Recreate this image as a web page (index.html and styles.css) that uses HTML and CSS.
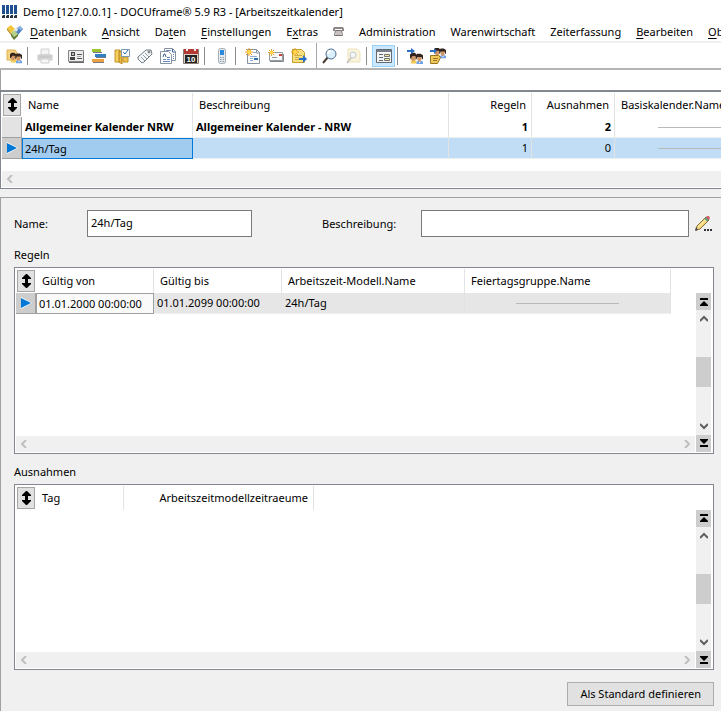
FILE: index.html
```html
<!DOCTYPE html>
<html lang="de">
<head>
<meta charset="utf-8">
<title>Demo [127.0.0.1] - DOCUframe® 5.9 R3 - [Arbeitszeitkalender]</title>
<link rel="stylesheet" href="styles.css">
</head>
<body>
<svg class="defs" width="0" height="0" aria-hidden="true">
  <symbol id="sort" viewBox="0 0 10 14"><path d="M5 0h1l4 4v1H7v4h3v1l-4 4H5L1 10V9h3V5H1V4z"/></symbol>
  <symbol id="play" viewBox="0 0 12 12"><path d="M1 0l11 6-11 6z" fill="#fff"/><path d="M1 1l10 5-10 5z" fill="#0078d7"/></symbol>
  <symbol id="left" viewBox="0 0 8 8"><path d="M6 0L2 4l4 4" fill="none" stroke="#bfbfbf" stroke-width="2"/></symbol>
  <symbol id="right" viewBox="0 0 8 8"><path d="M2 0l4 4-4 4" fill="none" stroke="#bfbfbf" stroke-width="2"/></symbol>
  <symbol id="up" viewBox="0 0 8 8"><path d="M0 6l4-4 4 4" fill="none" stroke="#606060" stroke-width="2"/></symbol>
  <symbol id="down" viewBox="0 0 8 8"><path d="M0 2l4 4 4-4" fill="none" stroke="#606060" stroke-width="2"/></symbol>
  <symbol id="first" viewBox="0 0 8 8"><path d="M0 0h8v2H0zM4 3l4 4v1H0V7z"/></symbol>
  <symbol id="last" viewBox="0 0 8 8"><path d="M0 6h8v2H0zM0 0h8v1L4 5 0 1z"/></symbol>
  <symbol id="star" viewBox="0 0 8 8"><path d="M4 0v8M0 4h8M1 1l6 6M7 1L1 7" stroke="#e39a1c" stroke-width="1"/><circle cx="4" cy="4" r="2" fill="#ffd84a"/></symbol>
  <symbol id="people" viewBox="0 0 16 16"><path d="M1 14v-3l2-1h3l2 1v3z" fill="#f3cb54"/><path d="M8 15v-3l2-1h4l2 1v3z" fill="#6fa0ea"/><path d="M1 4h6v5l-2 2H3L1 9z" fill="#cf9668"/><path d="M0 8V3l2-2h4l2 2v3L6 5H3L1 8z" fill="#33241e"/><path d="M9 5h5v5l-2 2h-1l-2-2z" fill="#cf9668"/><path d="M7 9V4l2-2h4l3 2v5h-1l-1-3H9L8 9z" fill="#33241e"/><path d="M11 12l1 2 1-2z" fill="#fff"/></symbol>
</svg>

<header class="title">
  <svg class="logo" width="16" height="14" viewBox="0 0 16 14"><path d="M0 0h3v9H0zM4 0h3v9H4zM8 0h3v9H8zM12 0h3v9h-3z" fill="#1d4f91"/><path d="M0 10h3v3H0zM4 10h3v3H4zM8 10h3v3H8zM12 10h3v3h-3z" fill="#27323f"/><path d="M0 10h1v1H0zM4 10h1v1H4zM8 10h1v1H8zM12 10h1v1h-1z" fill="#b4c0cc"/></svg>
  <span>Demo [127.0.0.1] - DOCUframe® 5.9 R3 - [Arbeitszeitkalender]</span>
</header>

<nav class="menu">
  <svg class="menu-logo" width="16" height="16" viewBox="0 0 16 16"><path d="M0 4l4-3 4 4-4 4z" fill="#f2c63c"/><path d="M0 4l4 5v2L0 6z" fill="#b98d18"/><path d="M10 4l3-2 3 3-5 6-3-3z" fill="#4f7fc4"/><path d="M10 4l3-2 3 3-2 1z" fill="#8fb4e2"/><path d="M4 9l3-3 4 4-4 3z" fill="#b8cf86"/><path d="M4 9l3 4v3l-3-4zM7 13l4-3v2l-4 4z" fill="#607a35"/><path d="M8 4l2-1 1 3-2 2z" fill="#dfe6ec"/></svg>
  <a href="#"><u>D</u>atenbank</a><a href="#"><u>A</u>nsicht</a><a href="#">Da<u>t</u>en</a><a href="#"><u>E</u>instellungen</a><a href="#">E<u>x</u>tras</a><a href="#" aria-label="Telefon"><svg width="11" height="10" viewBox="0 0 11 10"><path d="M1 0h9l1 2v2H9V2H2v2H0V2z" fill="#8b8585"/><path d="M2.500 3.500h6l1 5h-8z" fill="#f4f0f0" stroke="#776e6e"/><path d="M3 5h5M3 7h5" stroke="#a09494"/></svg></a><a href="#">Administration</a><a href="#">Warenwirtschaft</a><a href="#">Zeiterfassung</a><a href="#"><u>B</u>earbeiten</a><a href="#"><u>O</u>bjekt</a>
</nav>

<div class="toolbar" role="toolbar">
  <button aria-label="Benutzer"><svg width="16" height="16" viewBox="0 0 16 16"><path d="M1 2h8l2 3v7H1z" fill="#f5d482" stroke="#dcae50"/><use href="#people" x="4" y="4" width="12" height="12"/></svg></button>
  <i class="sep"></i>
  <button aria-label="Drucken"><svg width="16" height="16" viewBox="0 0 16 16"><path d="M4 1h8v6H4z" fill="#f4f4f4" stroke="#d2d2d2"/><path d="M1 7h14v5H1z" fill="#d9d9d9" stroke="#c7c7c7"/><path d="M2 9h12" stroke="#bababa"/><path d="M4 11h8v4H4z" fill="#f7f7f7" stroke="#cfcfcf"/></svg></button>
  <i class="sep"></i>
  <button aria-label="Adresse"><svg width="16" height="16" viewBox="0 0 16 16"><path d="M.5 2.500h15v11H.5z" fill="#ececec" stroke="#858585"/><path d="M1 14.500h15V4" fill="none" stroke="#666"/><path d="M3 4h4v4H3zM2 9h5v3H2z" fill="#444"/><path d="M4 5h2v2H4z" fill="#bbb"/><path d="M9 6.500h5M9 10.500h5" stroke="#555"/><path d="M9 8.500h4" stroke="#aaa"/></svg></button>
  <button aria-label="Projekte"><svg width="16" height="16" viewBox="0 0 16 16"><path d="M1 1h9v3H1z" fill="#9cc22e"/><path d="M4 6h11v3H4z" fill="#2f7fc2"/><path d="M1 11h12v3H1z" fill="#eda03f"/><path d="M2 4.500h9M5 9.500h10M2 14.500h11" stroke="#778"/></svg></button>
  <button aria-label="Aufgaben"><svg width="16" height="16" viewBox="0 0 16 16"><path d="M1 2h5v12H1z" fill="#f4d061" stroke="#c28e22"/><path d="M5 3l3 1v12l-3-2z" fill="#e5b740" stroke="#b8841d"/><path d="M9 9h5v5H9z" fill="#edc453" stroke="#c28e22"/><path d="M7.500 1.500h8v7h-8z" fill="#fff" stroke="#7c98b5"/><path d="M9 4l2 2 3-4" fill="none" stroke="#286ca9"/></svg></button>
  <button aria-label="Etikett"><svg width="16" height="16" viewBox="0 0 16 16"><path d="M1 9l8-7h5l1 4-8 8-2 1-4-4z" fill="#f5f7f8" stroke="#717b84"/><path d="M4 9l4 4M6 7l4 4M8 5l4 4" stroke="#8d9ba8"/><circle cx="12" cy="4" r="1" fill="#fff" stroke="#666"/></svg></button>
  <button aria-label="Dokumente"><svg width="16" height="16" viewBox="0 0 16 16"><path d="M4.500.5h8l3 3v9h-11z" fill="#fff" stroke="#8792a0"/><path d="M.5 3.500h8l3 3v9H.5z" fill="#fff" stroke="#8792a0"/><path d="M6 2.500h5M13 6.500h1M13 8.500h1M13 10.500h1M7 9.500h3M3 11.500h3M7 11.500h3M3 13.500h7" stroke="#6587bd"/><path d="M3 9l1-3h1l1 3M12.500 1v3h3" fill="none" stroke="#3e679d"/></svg></button>
  <button aria-label="Kalender"><svg width="16" height="16" viewBox="0 0 16 16"><path d="M.5 1.500h15v14H.5z" fill="#ddd5c8" stroke="#8a7a70"/><path d="M1 1h14v5H1z" fill="#b63a34"/><path d="M2 7h12v8H2z" fill="#222"/><path d="M4 0v3M12 0v3" stroke="#eee" stroke-width="2"/><text class="day" x="8" y="14" text-anchor="middle">10</text></svg></button>
  <i class="sep"></i>
  <button aria-label="Telefon"><svg width="16" height="16" viewBox="0 0 16 16"><rect x="4.500" y=".5" width="7" height="15" rx="2" fill="#e6ebef" stroke="#a3adb6"/><path d="M6 2h4v5H6z" fill="#2d8ada"/><path d="M6 9.500h4M6 11.500h4M6 13.500h4" stroke="#8d9aa5" stroke-dasharray="1 .5"/></svg></button>
  <i class="sep"></i>
  <button aria-label="Neues Dokument"><svg width="16" height="16" viewBox="0 0 16 16"><path d="M2.500 1.500h9l3 3v11h-12z" fill="#fff" stroke="#8793a0"/><path d="M11.500 2v3h3" fill="none" stroke="#8793a0"/><path d="M8 4.500h3M5 8.500h7M5 10.500h3M5 12.500h3" stroke="#8cadd4"/><path d="M9 11h4" stroke="#246eb5" stroke-width="2"/><use href="#star" width="8" height="8"/></svg></button>
  <button aria-label="Neue Nachricht"><svg width="16" height="16" viewBox="0 0 16 16"><path d="M1.500 4.500h13v8h-13z" fill="#f7f8f9" stroke="#909ba6"/><path d="M2 13.500h13.500V6" fill="none" stroke="#888"/><path d="M4 9.500h5" stroke="#999"/><path d="M11 6h3v2h-3z" fill="#cd443d"/><use href="#star" y="1" width="7" height="7"/></svg></button>
  <button aria-label="Weiterleiten"><svg width="16" height="16" viewBox="0 0 16 16"><path d="M1.500 1.500h9l3 3v10h-12z" fill="#f8e080" stroke="#c49f2e"/><path d="M4 7.500h7M4 9.500h4M4 11.500h4" stroke="#cbae4a"/><path d="M8 10h4V7l4 4-4 4v-3H8z" fill="#286fc9"/><use href="#star" width="8" height="8"/></svg></button>
  <i class="sep full"></i>
  <button aria-label="Suchen"><svg width="16" height="16" viewBox="0 0 16 16"><path d="M6 9l-5 6" stroke="#4b4038" stroke-width="2"/><circle cx="9" cy="6" r="5" fill="#d9effc" stroke="#4f6b92"/><path d="M6 6q0-3 3-3" fill="none" stroke="#fff" stroke-width="2"/></svg></button>
  <button aria-label="Dokument suchen"><svg width="16" height="16" viewBox="0 0 16 16"><path d="M3 1h9l3 3v10H3z" fill="#fbf4dc" stroke="#eee1b9"/><path d="M6 10l-4 5" stroke="#c8c5c1" stroke-width="2"/><circle cx="8" cy="7" r="3" fill="#f5f8fa" stroke="#c3c9ce"/></svg></button>
  <i class="sep"></i>
  <button class="active" aria-label="Formularansicht" aria-pressed="true"><svg width="16" height="14" viewBox="0 0 16 14"><path d="M.5.5h15v13H.5z" fill="#f4f4f2" stroke="#626972"/><path d="M1 1h14v2H1z" fill="#77808a"/><path d="M3 5.500h4M3 8.500h4M3 11.500h4" stroke="#5e6872"/><path d="M8.500 5.500h5v2h-5zM8.500 9.500h5v2h-5z" fill="#f5e79b" stroke="#6f756f"/></svg></button>
  <i class="sep"></i>
  <button aria-label="Gruppe zuweisen"><svg width="16" height="16" viewBox="0 0 16 16"><use href="#people" x="3" y="4" width="13" height="13"/><path d="M0 2h4V0l4 3-4 3V4H0z" fill="#2c6fc5"/></svg></button>
  <button aria-label="Gruppe bearbeiten"><svg width="16" height="16" viewBox="0 0 16 16"><use href="#people" x="4" y="-1" width="12" height="12"/><path d="M.5 7.500h8l2 2-3 6h-7z" fill="#f1c958" stroke="#98752a"/><path d="M3 10.500h5M3 12.500h4" stroke="#98752a"/><path d="M0 2h4V0l3 3-3 3V4H0z" fill="#2c6fc5"/></svg></button>
</div>
<div class="strip"></div>

<section class="overview">
  <table class="grid main-grid">
    <colgroup><col class="c20"><col class="c171"><col class="c256"><col class="c83"><col class="c83"><col class="c174"></colgroup>
    <thead><tr><th class="mark"><button aria-label="Sortieren"><svg width="10" height="14"><use href="#sort"/></svg></button></th><th>Name</th><th>Beschreibung</th><th class="num">Regeln</th><th class="num">Ausnahmen</th><th>Basiskalender.Name</th></tr></thead>
    <tbody>
      <tr class="strong"><td class="mark"></td><td>Allgemeiner Kalender NRW</td><td>Allgemeiner Kalender - NRW</td><td class="num">1</td><td class="num">2</td><td><hr></td></tr>
      <tr class="selected"><td class="mark"><svg width="12" height="12"><use href="#play"/></svg></td><td class="focus">24h/Tag</td><td></td><td class="num">1</td><td class="num">0</td><td><hr></td></tr>
    </tbody>
  </table>
  <div class="hscroll"><svg width="8" height="8"><use href="#left"/></svg></div>
</section>

<main class="detail">
  <div class="form">
    <label for="name">Name:</label><input id="name" value="24h/Tag">
    <label class="second" for="desc">Beschreibung:</label><input id="desc">
    <button class="edit" aria-label="Bearbeiten"><svg width="17" height="17" viewBox="0 0 17 17"><path d="M1 15l1-4 9-9 3 3-9 9z" fill="#f3d778" stroke="#86693a"/><path d="M3 12l9-8" stroke="#fff3b3"/><path d="M11 2l1-1h2l1 2-1 2z" fill="#d5606c"/><path d="M10 3l3 3" stroke="#5e9a80" stroke-width="2"/><path d="M0 16l1-4 2 3z" fill="#454545"/><path d="M9 14h2v2H9zM12 14h2v2h-2zM15 14h2v2h-2z" fill="#333"/></svg></button>
  </div>

  <h2>Regeln</h2>
  <section class="box">
    <div class="content">
      <div class="rows">
        <table class="grid">
          <colgroup><col class="c20"><col class="c118"><col class="c128"><col class="c183"><col class="c206"></colgroup>
          <thead><tr><th class="mark"><button aria-label="Sortieren"><svg width="10" height="14"><use href="#sort"/></svg></button></th><th>Gültig von</th><th>Gültig bis</th><th>Arbeitszeit-Modell.Name</th><th>Feiertagsgruppe.Name</th></tr></thead>
          <tbody><tr class="current"><td class="mark"><svg width="12" height="12"><use href="#play"/></svg></td><td class="focus">01.01.2000 00:00:00</td><td>01.01.2099 00:00:00</td><td>24h/Tag</td><td><hr></td></tr></tbody>
        </table>
      </div>
      <div class="hscroll"><svg width="8" height="8"><use href="#left"/></svg><svg width="8" height="8"><use href="#right"/></svg></div>
    </div>
    <div class="vscroll">
      <button aria-label="Anfang"><svg width="8" height="8"><use href="#first"/></svg></button>
      <div class="track"><svg width="8" height="8"><use href="#up"/></svg><span class="thumb"></span><svg width="8" height="8"><use href="#down"/></svg></div>
      <button aria-label="Ende"><svg width="8" height="8"><use href="#last"/></svg></button>
    </div>
  </section>

  <h2>Ausnahmen</h2>
  <section class="box">
    <div class="content">
      <div class="rows">
        <table class="grid">
          <colgroup><col class="c20"><col class="c88"><col class="c190"></colgroup>
          <thead><tr><th class="mark"><button aria-label="Sortieren"><svg width="10" height="14"><use href="#sort"/></svg></button></th><th>Tag</th><th class="num">Arbeitszeitmodellzeitraeume</th></tr></thead>
        </table>
      </div>
      <div class="hscroll"><svg width="8" height="8"><use href="#left"/></svg><svg width="8" height="8"><use href="#right"/></svg></div>
    </div>
    <div class="vscroll">
      <button aria-label="Anfang"><svg width="8" height="8"><use href="#first"/></svg></button>
      <div class="track"><svg width="8" height="8"><use href="#up"/></svg><span class="thumb"></span><svg width="8" height="8"><use href="#down"/></svg></div>
      <button aria-label="Ende"><svg width="8" height="8"><use href="#last"/></svg></button>
    </div>
  </section>
  <button class="default">Als Standard definieren</button>
</main>
</body>
</html>
```
FILE: styles.css
```css
* { box-sizing: border-box; }
body {
  margin: 0;
  min-height: 100vh;
  display: flex;
  flex-direction: column;
  overflow-x: hidden;
  background: #f0f0f0;
  color: #000;
  font: 11px/16px "Segoe UI", "Noto Sans", "Open Sans", sans-serif;
}
button, input { font: inherit; color: inherit; }
button { padding: 0; border: 0; background: none; }
svg { display: block; flex: none; }
.defs { position: absolute; }

.title { display: flex; align-items: center; gap: 5px; height: 23px; padding-left: 2px; background: #fff; }
.menu {
  display: flex;
  align-items: center;
  gap: 15px;
  height: 20px;
  padding-left: 7px;
  overflow: hidden;
  white-space: nowrap;
  background: #fff;
  border-bottom: 2px solid #f0f0f0;
}
.menu a { color: #000; text-decoration: none; }
.menu-logo { margin-right: -8px; }
.menu u { text-underline-offset: 2px; }

.toolbar { display: flex; align-items: center; height: 27px; padding-left: 2px; background: #fff; border-bottom: 2px solid #b4b4b4; }
.toolbar button { display: flex; align-items: center; justify-content: center; width: 23px; height: 22px; }
.toolbar .active { background: #cce8ff; border: 1px solid #99d1ff; }
.sep { width: 1px; height: 18px; margin: 0 5px 0 2px; background: #8c8c8c; }
.sep.full { height: 25px; margin: 0 1px 0 6px; background: #a8a8a8; }
.day { font: bold 8px "Liberation Sans", sans-serif; fill: #fff; }
.strip { height: 20px; background: #fff; border-left: 1px solid #a0a0a0; }

.overview { height: 99px; padding: 1px 0 1px 1px; overflow: hidden; display: flex; flex-direction: column; justify-content: space-between; background: #fff; border: 1px solid #828790; border-top: 2px solid #828790; border-right: 0; }

.grid { width: 0; table-layout: fixed; border-collapse: separate; border-spacing: 0; white-space: nowrap; }
.c20 { width: 20px; }
.c83 { width: 83px; }
.c88 { width: 88px; }
.c118 { width: 118px; }
.c128 { width: 128px; }
.c171 { width: 171px; }
.c174 { width: 174px; }
.c183 { width: 183px; }
.c190 { width: 190px; }
.c206 { width: 206px; }
.c256 { width: 256px; }
.grid th { height: 24px; padding: 0 5px 0 6px; font-weight: 400; text-align: left; border-right: 1px solid #e3e3e3; }
.grid td { height: 21px; padding: 0 3px; border-right: 1px solid #e3e3e3; border-bottom: 1px solid #f0f0f0; }
.grid .num { text-align: right; }
.grid .mark { padding: 0; border-right: 0; }
.grid td.mark { background: #e3e3e3; border-right: 1px solid #a0a0a0; border-bottom: 1px solid #a0a0a0; }
.mark svg { margin: auto; }
.mark button { display: block; width: 18px; height: 22px; margin: 0 1px; background: #e1e1e1; border: 1px solid #a5a5a5; }
.strong { font-weight: 700; }
.selected td { background: #c0ddf5; }
.selected td.mark, .current td.mark { background: #cdcdcd; }
.current td { background: #e6e6e6; }
.selected td.focus { padding-left: 2px; background: #a1ccf0; border: 1px solid #0078d7; }
.current td.focus { padding-left: 2px; background: #fafafa; border: 1px solid #a0a0a0; }
.grid hr { width: 52%; height: 1px; margin: 0 auto; border: 0; background: #b9b9b9; }

.hscroll { display: flex; align-items: center; justify-content: space-between; height: 16px; padding: 0 4px; background: #f0f0f0; }

.detail { flex: 1; display: flex; flex-direction: column; margin-top: 8px; padding: 12px 7px 5px 13px; border-top: 1px solid #a0a0a0; border-left: 1px solid #a0a0a0; }
.form { display: grid; grid-template-columns: 73px 165px 169px 1fr 16px; align-items: center; height: 27px; margin-right: 3px; }
.form input { width: 100%; height: 27px; padding: 0 3px 3px; background: #fff; border: 1px solid #7a7a7a; border-radius: 0; outline: 0; }
.form .second { padding-left: 70px; }
.edit { justify-self: end; margin-right: -1px; }
#desc { width: calc(100% - 6px); }
h2 { margin: 0; padding: 10px 0 4px; font-size: 11px; line-height: 16px; font-weight: 400; }
.box { flex: 1; display: flex; gap: 1px; min-height: 120px; padding: 1px 2px 1px 1px; background: #fff; border: 1px solid #828790; }
.content { flex: 1; min-width: 0; display: flex; flex-direction: column; }
.rows { flex: 1; overflow: hidden; }
.vscroll { display: flex; flex-direction: column; width: 15px; margin-top: 24px; background: #f0f0f0; }
.vscroll button { display: flex; align-items: center; justify-content: center; height: 17px; background: #cdcdcd; }
.track { flex: 1; display: flex; flex-direction: column; align-items: center; justify-content: space-between; padding: 5px 0; }
.thumb { width: 15px; height: 30px; background: #cdcdcd; }
.default { align-self: flex-end; height: 24px; margin-top: 12px; padding: 0 12px; background: #e1e1e1; border: 1px solid #adadad; }
```
